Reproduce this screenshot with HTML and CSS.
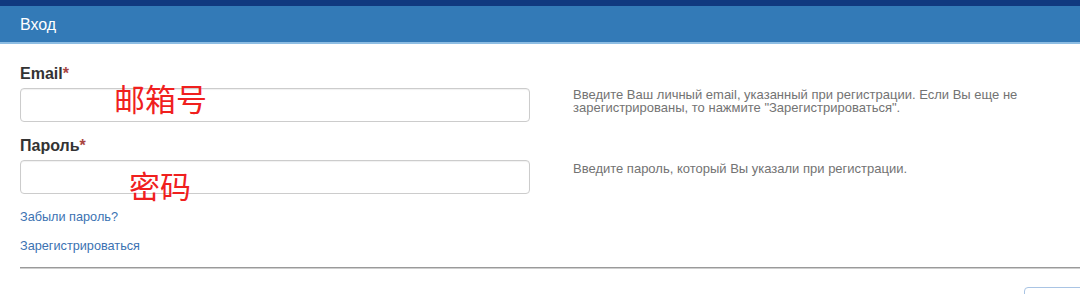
FILE: index.html
```html
<!DOCTYPE html>
<html lang="ru">
<head>
<meta charset="utf-8">
<title>Вход</title>
<link rel="stylesheet" href="styles.css">
</head>
<body>
<div class="page">
  <div class="topband"></div>
  <div class="panel-heading">Вход</div>
  <form class="form">
    <div class="group">
      <label class="label">Email<span class="req">*</span></label>
      <div class="input-wrap">
        <input class="control" type="text">
        <span class="note note-email">邮箱号</span>
      </div>
      <p class="help">Введите Ваш личный email, указанный при регистрации. Если Вы еще не зарегистрированы, то нажмите "Зарегистрироваться".</p>
    </div>
    <div class="group">
      <label class="label">Пароль<span class="req">*</span></label>
      <div class="input-wrap">
        <input class="control" type="password">
        <span class="note note-pass">密码</span>
      </div>
      <p class="help help-pass">Введите пароль, который Вы указали при регистрации.</p>
    </div>
    <div class="links">
      <a class="link" href="#">Забыли пароль?</a>
      <a class="link" href="#">Зарегистрироваться</a>
    </div>
    <div class="rule"></div>
    <div class="actions">
      <button class="btn" type="button"></button>
    </div>
  </form>
</div>
</body>
</html>
```

FILE: styles.css
```css
html, body {
  margin: 0;
  padding: 0;
  background: #fff;
  overflow: hidden;
}
.page {
  width: 1080px;
  height: 294px;
  overflow: hidden;
  font-family: "Liberation Sans", Arial, sans-serif;
  color: #333;
}
.topband {
  height: 6px;
  background: #10397f;
}
.panel-heading {
  height: 36px;
  line-height: 37px;
  background: #337ab7;
  border-bottom: 2px solid #8dbde3;
  color: #fff;
  font-size: 16px;
  padding-left: 20px;
}
.form {
  padding: 20px 0 0 20px;
  margin: 0;
}
.group {
  display: grid;
  grid-template-columns: 510px 1fr;
  column-gap: 43px;
  margin-bottom: 14px;
}
.label {
  grid-column: 1;
  grid-row: 1;
  font-size: 16px;
  font-weight: bold;
  line-height: 20px;
  margin-bottom: 4px;
}
.req {
  color: #a94442;
  font-weight: bold;
}
.input-wrap {
  grid-column: 1;
  grid-row: 2;
  position: relative;
}
.control {
  display: block;
  box-sizing: border-box;
  width: 510px;
  height: 34px;
  margin: 0;
  border: 1px solid #ccc;
  border-radius: 4px;
  background: #fff;
  box-shadow: inset 0 1px 1px rgba(0,0,0,0.06);
  font-size: 14px;
  padding: 6px 12px;
}
.note {
  position: absolute;
  font-family: "Noto Sans CJK SC", sans-serif;
  font-size: 31px;
  line-height: 1;
  color: #f0201e;
  pointer-events: none;
}
.note-email {
  left: 94px;
  top: -6px;
}
.note-pass {
  left: 109px;
  top: 9px;
}
.help {
  grid-column: 2;
  grid-row: 2;
  margin: 0;
  padding-top: 0;
  font-size: 13px;
  line-height: 13px;
  color: #737373;
  max-width: 480px;
}
.help-pass {
  padding-top: 2px;
}
.links {
  display: flex;
  flex-direction: column;
  align-items: flex-start;
  gap: 11px;
  padding-top: 0;
}
.link {
  font-size: 12.7px;
  line-height: 18px;
  color: #3b72b2;
  text-decoration: none;
}
.rule {
  margin-top: 12px;
  height: 0;
  border-top: 1px solid #9a9a9a;
  border-bottom: 1px solid #cfcfcf;
}
.actions {
  display: flex;
  justify-content: flex-end;
  padding-top: 18px;
}
.btn {
  width: 70px;
  height: 34px;
  margin-right: -14px;
  border: 1px solid #a9c4e4;
  border-radius: 4px;
  background: #fff;
  padding: 0;
}
```
